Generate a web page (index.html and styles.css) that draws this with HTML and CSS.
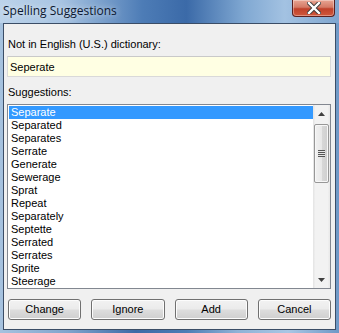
FILE: index.html
```html
<!DOCTYPE html>
<html>
<head>
<meta charset="utf-8">
<link rel="stylesheet" href="styles.css">
</head>
<body>
<div class="window">
  <div class="titlebar">
    <span class="title">Spelling Suggestions</span>
    <div class="close">
      <svg width="14" height="12" viewBox="0 0 14 12"><path d="M2 1 L12 11 M12 1 L2 11" stroke="#3a3a3a" stroke-width="4.2" stroke-linecap="square" fill="none"/><path d="M2 1 L12 11 M12 1 L2 11" stroke="#ffffff" stroke-width="2.4" stroke-linecap="square" fill="none"/></svg>
    </div>
  </div>
  <div class="client">
    <div class="label first">Not in English (U.S.) dictionary:</div>
    <div class="input">Seperate</div>
    <div class="label second">Suggestions:</div>
    <div class="listbox">
      <div class="items">
        <div class="item selected">Separate</div>
        <div class="item">Separated</div>
        <div class="item">Separates</div>
        <div class="item">Serrate</div>
        <div class="item">Generate</div>
        <div class="item">Sewerage</div>
        <div class="item">Sprat</div>
        <div class="item">Repeat</div>
        <div class="item">Separately</div>
        <div class="item">Septette</div>
        <div class="item">Serrated</div>
        <div class="item">Serrates</div>
        <div class="item">Sprite</div>
        <div class="item">Steerage</div>
      </div>
      <div class="scrollbar">
        <div class="arrow up"><svg width="7" height="4" viewBox="0 0 7 4"><path d="M3.5 0 L7 4 L0 4 Z" fill="#404040"/></svg></div>
        <div class="track">
          <div class="thumb"><div class="grip"></div></div>
        </div>
        <div class="arrow down"><svg width="7" height="4" viewBox="0 0 7 4"><path d="M0 0 L7 0 L3.5 4 Z" fill="#404040"/></svg></div>
      </div>
    </div>
    <div class="buttons">
      <div class="btn">Change</div>
      <div class="btn">Ignore</div>
      <div class="btn">Add</div>
      <div class="btn">Cancel</div>
    </div>
  </div>
</div>
</body>
</html>
```
FILE: styles.css
```css
html, body {
  margin: 0;
  padding: 0;
}
body {
  width: 339px;
  height: 333px;
  overflow: hidden;
  font-family: "Liberation Sans", Arial, sans-serif;
}
.window {
  width: 339px;
  height: 333px;
  display: flex;
  flex-direction: column;
  background: linear-gradient(90deg, #a6c2df 0%, #7fa4cc 20%, #3d6aa6 40%, #4d7db5 55%, #8fb2d6 70%, #a9c6e4 85%, #6e98c6 100%);
}
.titlebar {
  height: 23px;
  flex: none;
  display: flex;
  align-items: flex-start;
  background: linear-gradient(90deg, #bcd3ea 0%, #a8c4e2 18%, #4d7cb6 42%, #3b6aa8 55%, #80a8d2 72%, #a3c2e2 84%, #7ea5cf 100%);
}
.title {
  font-family: "Open Sans", "Noto Sans", sans-serif;
  font-size: 12px;
  color: #0c1830;
  padding: 3px 0 0 3px;
  line-height: 16px;
  text-shadow: 0 0 6px rgba(255,255,255,0.8);
}
.close {
  margin-left: auto;
  margin-right: 4px;
  width: 43px;
  height: 17px;
  border: 1px solid #5a2020;
  border-top: none;
  border-radius: 0 0 4px 4px;
  box-sizing: border-box;
  background: linear-gradient(180deg, #e8a593 0%, #d47a66 45%, #c0412a 55%, #d0583c 100%);
  display: flex;
  align-items: center;
  justify-content: center;
  box-shadow: inset 0 0 0 1px rgba(255,255,255,0.35);
}
.client {
  flex: 1;
  margin: 0 3px 3px 3px;
  border: 1px solid #3b4d66;
  background: #f0f0f0;
  padding: 0 4px 0 3px;
  display: flex;
  flex-direction: column;
  font-size: 11px;
  color: #000;
}
.label {
  padding-left: 1px;
  height: 13px;
  line-height: 13px;
}
.label.first {
  margin-top: 14px;
}
.input {
  margin-top: 5px;
  height: 21px;
  box-sizing: border-box;
  border: 1px solid #d9d9d9;
  border-top-color: #c9c9c9;
  background: #ffffe3;
  padding: 3px 0 0 2px;
  line-height: 14px;
  font-size: 11px;
}
.label.second {
  margin-top: 9px;
}
.listbox {
  margin-top: 5px;
  height: 185px;
  box-sizing: border-box;
  border: 1px solid #828790;
  background: #fff;
  display: flex;
}
.items {
  flex: 1;
  overflow: hidden;
  padding: 1px 0 0 1px;
}
.item {
  height: 13px;
  line-height: 13px;
  padding-left: 2px;
  white-space: nowrap;
}
.item.selected {
  background: #3399ff;
  color: #fff;
}
.scrollbar {
  width: 17px;
  flex: none;
  display: flex;
  flex-direction: column;
  background: linear-gradient(90deg, #e3e3e3 0%, #f2f2f2 15%, #f2f2f2 85%, #e8e8e8 100%);
}
.arrow {
  height: 17px;
  display: flex;
  align-items: center;
  justify-content: center;
  flex: none;
}
.track {
  flex: 1;
}
.thumb {
  margin: 2px 1px 0 1px;
  height: 59px;
  box-sizing: border-box;
  border: 1px solid #979797;
  border-radius: 2px;
  background: linear-gradient(90deg, #f1f1f1 0%, #e8e8e8 50%, #d8d8d8 51%, #cfcfcf 100%);
  box-shadow: inset 0 0 0 1px #f7f7f7;
  display: flex;
  align-items: center;
  justify-content: center;
}
.grip {
  width: 7px;
  height: 7px;
  background: repeating-linear-gradient(180deg, #555 0px, #555 1px, #e6e6e6 1px, #e6e6e6 2px);
}
.buttons {
  margin-top: 10px;
  display: flex;
  gap: 10px;
  padding-left: 1px;
}
.btn {
  width: 74px;
  height: 21px;
  box-sizing: border-box;
  border: 1px solid #707070;
  border-radius: 3px;
  background: linear-gradient(180deg, #f2f2f2 0%, #ebebeb 48%, #dddddd 52%, #cfcfcf 100%);
  box-shadow: inset 0 0 0 1px #fcfcfc;
  text-align: center;
  line-height: 19px;
  font-size: 11px;
}
```
